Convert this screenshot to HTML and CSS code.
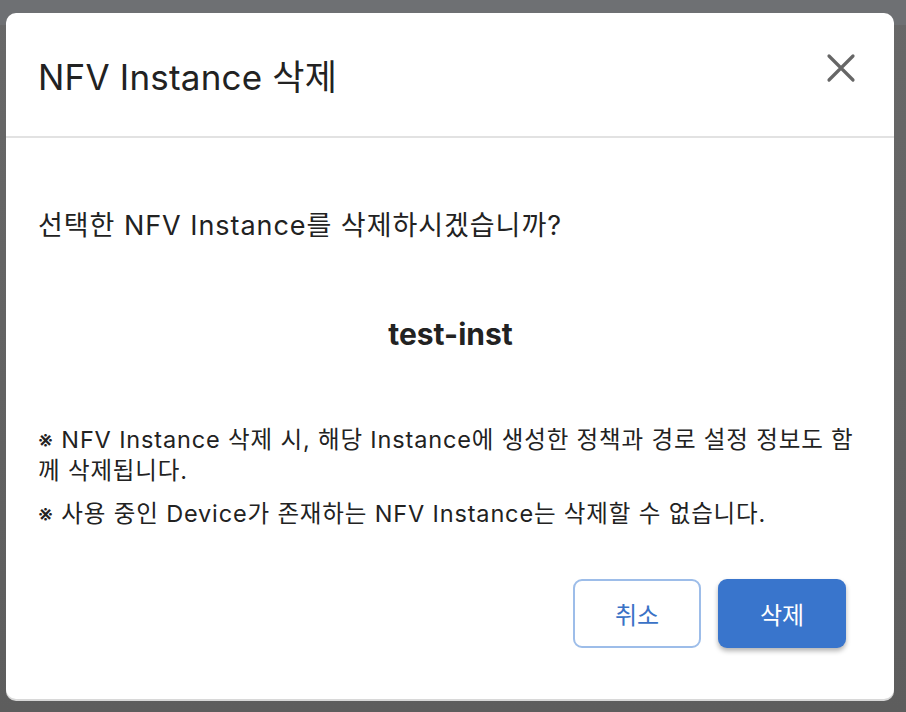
FILE: index.html
```html
<!DOCTYPE html>
<html lang="ko">
<head>
<meta charset="utf-8">
<title>NFV Instance 삭제</title>
<link rel="stylesheet" href="styles.css">
</head>
<body>
<div class="backdrop">
  <div class="topband"></div>
  <div class="modal">
    <div class="modal-header">
      <h1 class="modal-title">NFV Instance 삭제</h1>
      <button class="close-btn" aria-label="닫기">
        <svg width="30" height="30" viewBox="0 0 30 30"><path d="M3 3 L27 27 M27 3 L3 27" stroke="#666666" stroke-width="3.2" stroke-linecap="round" fill="none"/></svg>
      </button>
    </div>
    <div class="modal-body">
      <p class="question">선택한 NFV Instance를 삭제하시겠습니까?</p>
      <p class="target">test-inst</p>
      <div class="notes">
        <p class="note">※ NFV Instance 삭제 시, 해당 Instance에 생성한 정책과 경로 설정 정보도 함께 삭제됩니다.</p>
        <p class="note">※ 사용 중인 Device가 존재하는 NFV Instance는 삭제할 수 없습니다.</p>
      </div>
    </div>
    <div class="modal-footer">
      <button class="btn btn-cancel">취소</button>
      <button class="btn btn-primary">삭제</button>
    </div>
  </div>
</div>
</body>
</html>
```

FILE: styles.css
```css
html, body {
  margin: 0;
  padding: 0;
  width: 906px;
  height: 712px;
  overflow: hidden;
}
body {
  font-family: Inter, "Noto Sans CJK KR", sans-serif;
  color: #222;
}
.backdrop {
  position: relative;
  width: 906px;
  height: 712px;
  background: linear-gradient(180deg, #686868 0%, #5d5d5d 100%);
  box-sizing: border-box;
  padding: 13px 12px 13px 6px;
}
.topband {
  position: absolute;
  left: 0;
  top: 0;
  right: 0;
  height: 25px;
  background: #6e7073;
}
.modal {
  position: relative;
  background: #fff;
  border-radius: 10px;
  width: 888px;
  height: 686px;
  display: flex;
  flex-direction: column;
  box-shadow: 0 2px 0 #d8d8d8;
}
.modal-header {
  height: 123px;
  border-bottom: 2px solid #e2e2e2;
  display: flex;
  align-items: center;
  justify-content: space-between;
  padding: 0 38px 0 32px;
  flex: none;
}
.modal-title {
  margin: 0;
  font-size: 35px;
  font-weight: 400;
  color: #222;
  letter-spacing: 0.2px;
}
.close-btn {
  background: none;
  border: none;
  padding: 0;
  width: 30px;
  height: 30px;
  cursor: pointer;
  position: relative;
  top: -7px;
}
.modal-body {
  padding: 70px 38px 0 32px;
  flex: 1;
}
.question {
  margin: 0;
  font-size: 27px;
  line-height: 36px;
  letter-spacing: 0.95px;
  color: #222;
}
.target {
  margin: 70px 0 0;
  padding-left: 7px;
  text-align: center;
  font-size: 30px;
  font-weight: 700;
  line-height: 40px;
  color: #222;
}
.notes {
  margin-top: 70px;
  display: flex;
  flex-direction: column;
  gap: 12px;
}
.note {
  margin: 0;
  font-size: 23.5px;
  line-height: 31px;
  letter-spacing: 0.85px;
  color: #222;
}
.modal-footer {
  display: flex;
  justify-content: flex-end;
  gap: 17px;
  padding: 0 48px 51px 0;
  flex: none;
}
.btn {
  width: 128px;
  height: 69px;
  border-radius: 9px;
  font-family: Inter, "Noto Sans CJK KR", sans-serif;
  font-size: 24px;
  cursor: pointer;
  box-sizing: border-box;
}
.btn-cancel {
  background: #fff;
  border: 2px solid #9dbde9;
  color: #3a72c6;
}
.btn-primary {
  background: #3975cc;
  border: none;
  color: #fff;
  box-shadow: 0 3px 5px rgba(0, 0, 0, 0.3);
}
```
